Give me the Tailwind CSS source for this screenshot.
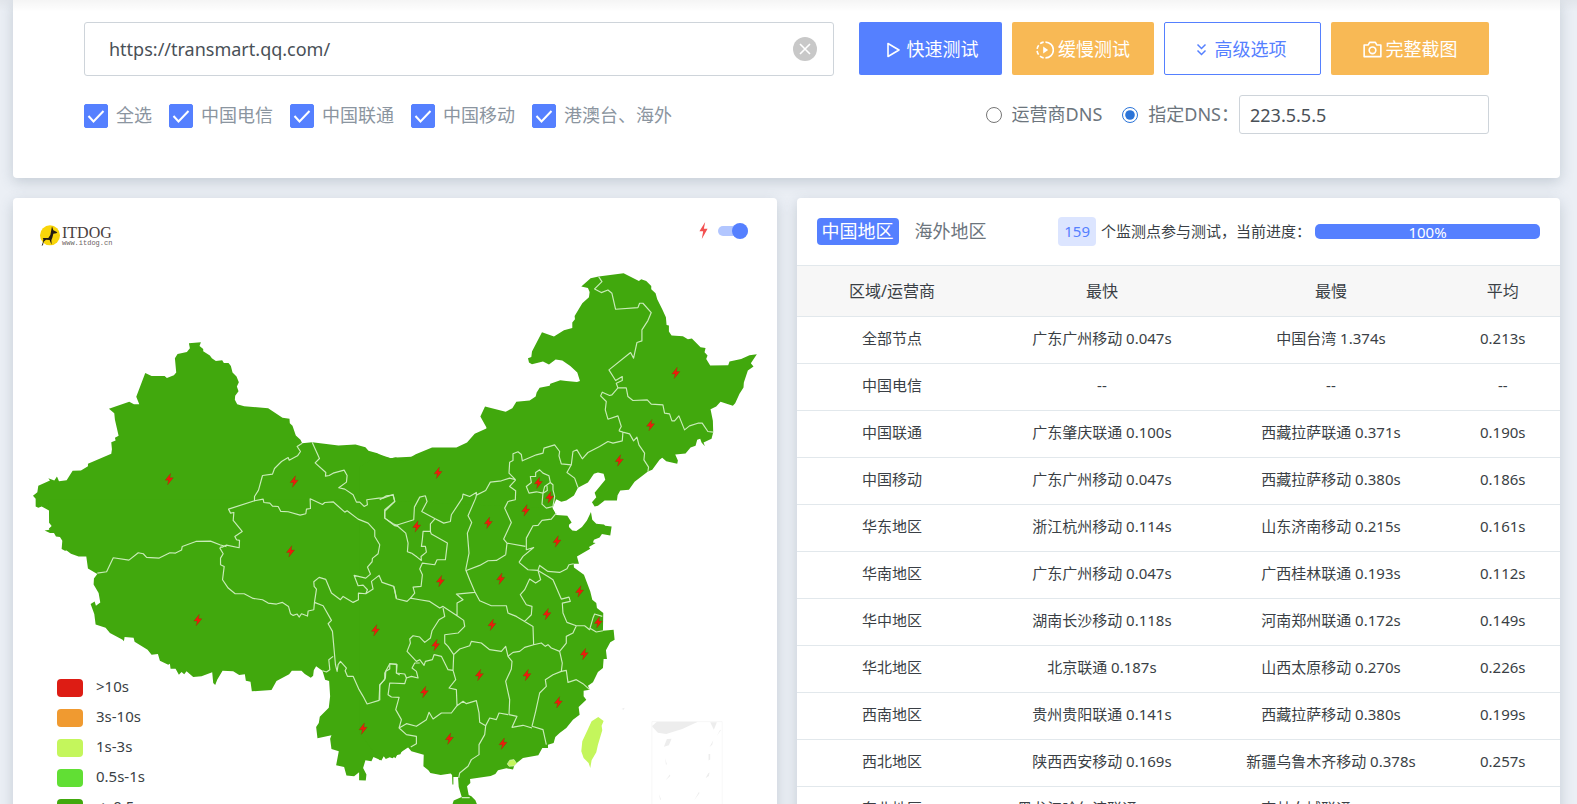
<!DOCTYPE html>
<html lang="zh-CN">
<head>
  <meta charset="UTF-8" />
  <meta name="viewport" content="width=device-width, initial-scale=1" />
  <title>ITDOG - 网站测速</title>
  <script src="https://cdn.jsdelivr.net/npm/@tailwindcss/browser@4"></script>
</head>
<body class="h-screen overflow-hidden bg-[#ebeff5] font-['Noto_Sans','Noto_Sans_CJK_SC',sans-serif] text-[15px] text-[#3a3f45]">
  <div class="absolute inset-x-0 top-0 h-3 bg-linear-to-b from-black/4 to-transparent"></div>

  <main class="pl-[13px] pr-[17px]">
    <!-- 测试表单 -->
    <form class="bg-white rounded-b px-[71px] pt-[22px] pb-11 shadow-[0_4px_14px_rgba(60,80,100,0.22)]">
      <div class="flex items-start gap-[10px]">
        <div class="relative flex-1 mr-[15px]">
          <input type="text" aria-label="网址" value="https://transmart.qq.com/" class="block w-full h-[54px] px-6 border border-[#ced4da] rounded-[3px] text-[18px] text-[#495057]" />
          <button type="button" aria-label="清空" class="absolute right-[17px] top-[15px]">
            <svg class="w-6 h-6" viewBox="0 0 24 24"><circle cx="12" cy="12" r="12" fill="#c8c8c8" /><path d="M7 7l10 10M17 7L7 17" stroke="#fff" stroke-width="1.6" /></svg>
          </button>
        </div>
        <button type="button" class="flex items-center justify-center gap-1 w-[143px] h-[53px] pt-[2px] rounded-[2px] bg-[#5580ff] text-white text-[18px]">
          <svg class="w-5 h-5" viewBox="0 0 20 20" fill="none" stroke="currentColor" stroke-width="1.6" stroke-linejoin="round"><path d="M5 3.500v13l11-6.500z" /></svg>
          快速测试
        </button>
        <button type="button" class="flex items-center justify-center gap-1 w-[142px] h-[53px] pt-[2px] rounded-[2px] bg-[#f8b955] text-white text-[18px]">
          <svg class="w-[18px] h-[18px]" viewBox="0 0 20 20" fill="none" stroke="currentColor" stroke-width="1.800"><path d="M10.500 1.200a8.800 8.800 0 0 1 0 17.600" /><path d="M8.500 18.700A8.800 8.800 0 0 1 1.200 9.500A8.800 8.800 0 0 1 8.500 1.300" stroke-dasharray="4.500 2.200" /><path d="M8 6.200v7.600l5.500-3.800z" fill="currentColor" stroke="none" /></svg>
          缓慢测试
        </button>
        <button type="button" class="flex items-center justify-center gap-1 w-[157px] h-[53px] pt-[2px] pr-[6px] rounded-[2px] border border-[#5580ff] text-[#5580ff] text-[18px]">
          <svg class="w-[18px] h-[18px]" viewBox="0 0 18 18" fill="none" stroke="currentColor" stroke-width="1.500"><path d="M4.500 3.500l4 4 4-4M4.500 9.500l4 4 4-4" /></svg>
          高级选项
        </button>
        <button type="button" class="flex items-center justify-center gap-1 w-[158px] h-[53px] pt-[2px] rounded-[2px] bg-[#f8b955] text-white text-[18px]">
          <svg class="w-[19px] h-[19px]" viewBox="0 0 20 20" fill="none" stroke="currentColor" stroke-width="1.700"><path d="M1.200 5.200h4.300l1.500-2.700h6l1.500 2.700h4.300v12.300H1.200z" stroke-linejoin="round" /><circle cx="10" cy="10.800" r="3.500" /></svg>
          完整截图
        </button>
      </div>

      <div class="flex items-center justify-between mt-[19px] text-[18px]">
        <div class="flex gap-[17px] pt-[2px] text-[#8b95a0]">
          <label class="flex items-center gap-2"><span class="relative block w-6 h-6"><input type="checkbox" checked class="block w-6 h-6 appearance-none rounded-[2px] border border-[#5580ff] checked:bg-[#5580ff]" /><svg class="absolute inset-0 w-6 h-6 pointer-events-none" viewBox="0 0 24 24" fill="none" stroke="#fff" stroke-width="2"><path d="M4.500 12l5 5.500L19.500 7" /></svg></span>全选</label>
          <label class="flex items-center gap-2"><span class="relative block w-6 h-6"><input type="checkbox" checked class="block w-6 h-6 appearance-none rounded-[2px] border border-[#5580ff] checked:bg-[#5580ff]" /><svg class="absolute inset-0 w-6 h-6 pointer-events-none" viewBox="0 0 24 24" fill="none" stroke="#fff" stroke-width="2"><path d="M4.500 12l5 5.500L19.500 7" /></svg></span>中国电信</label>
          <label class="flex items-center gap-2"><span class="relative block w-6 h-6"><input type="checkbox" checked class="block w-6 h-6 appearance-none rounded-[2px] border border-[#5580ff] checked:bg-[#5580ff]" /><svg class="absolute inset-0 w-6 h-6 pointer-events-none" viewBox="0 0 24 24" fill="none" stroke="#fff" stroke-width="2"><path d="M4.500 12l5 5.500L19.500 7" /></svg></span>中国联通</label>
          <label class="flex items-center gap-2"><span class="relative block w-6 h-6"><input type="checkbox" checked class="block w-6 h-6 appearance-none rounded-[2px] border border-[#5580ff] checked:bg-[#5580ff]" /><svg class="absolute inset-0 w-6 h-6 pointer-events-none" viewBox="0 0 24 24" fill="none" stroke="#fff" stroke-width="2"><path d="M4.500 12l5 5.500L19.500 7" /></svg></span>中国移动</label>
          <label class="flex items-center gap-2"><span class="relative block w-6 h-6"><input type="checkbox" checked class="block w-6 h-6 appearance-none rounded-[2px] border border-[#5580ff] checked:bg-[#5580ff]" /><svg class="absolute inset-0 w-6 h-6 pointer-events-none" viewBox="0 0 24 24" fill="none" stroke="#fff" stroke-width="2"><path d="M4.500 12l5 5.500L19.500 7" /></svg></span>港澳台、海外</label>
        </div>
        <div class="flex items-center text-[#6c757d]">
          <label class="flex items-center gap-[10px] mr-5"><input type="radio" name="dns" class="w-4 h-4 accent-[#2b74d8]" />运营商DNS</label>
          <label class="flex items-center gap-[10px]"><input type="radio" name="dns" checked class="w-4 h-4 accent-[#2b74d8]" />指定DNS&#xFF1A;</label>
          <input type="text" aria-label="DNS" value="223.5.5.5" class="w-[250px] h-[39px] px-[10px] border border-[#ced4da] rounded-[3px] text-[18px] text-[#495057]" />
        </div>
      </div>
    </form>

    <div class="grid grid-cols-2 gap-5 mt-5 items-start">
      <!-- 地图 -->
      <section class="relative bg-white rounded shadow-[0_4px_14px_rgba(60,80,100,0.22)]">
        <svg class="block w-full" viewBox="39 594 2292 1950">
          <defs>
            <path id="bolt" d="M4-17L-12 3H-2L-5 17L12-4H2z" fill="#f01a0c" stroke="#8a3a08" stroke-width="1" />
          </defs>
          <g fill="#41a80d">
            <path transform="translate(0 570)" d="M99 918L112 907 115 888 150 872 145 865 163 872 171 860 177 874 200 871 218 843 243 842 264 829 264 822 334 792 336 778 334 757 347 752 345 744 356 738 345 690 343 670 327 657 388 636 402 643 418 643 409 621 436 549 455 558 494 558 501 564 522 556 529 548 525 505 533 492 561 486 570 475 567 460 603 457 599 468 610 477 610 484 630 497 636 505 648 513 667 511 672 519 686 519 693 528 698 548 710 560 717 577 711 590 716 604 706 618 705 630 712 643 733 649 805 655 848 684 869 687 870 700 878 708 888 737 902 750 907 760 937 757 1016 767 1067 764 1097 772 1106 783 1133 790 1153 801 1173 805 1190 803 1250 800 1250 1000 148 1000 147 962 125 950 115 954 107 950 107 927z" />
            <path transform="translate(0 1440)" d="M147 60L147 92 148 130 155 139 147 146 148 150 134 152 150 160 162 160 168 170 180 172 187 183 185 208 195 213 200 212 213 222 236 230 259 230 264 266 292 283 282 296 281 314 296 340 301 368 288 378 284 365 272 373 283 403 287 434 317 444 330 460 368 480 372 485 374 472 401 474 404 486 443 510 455 525 474 523 480 543 505 555 510 552 512 567 527 567 537 585 545 577 553 584 560 575 580 592 605 590 637 578 640 610 646 616 652 600 668 573 700 575 718 586 735 584 738 603 752 606 756 635 815 631 830 604 868 584 876 573 905 573 915 583 933 594 940 588 942 572 949 560 968 573 976 600 988 604 991 650 987 684 960 711 957 730 949 742 953 776 995 767 991 777 995 808 1017 815 1009 857 1033 862 1040 888 1063 890 1078 878 1078 902 1098 903 1100 885 1090 865 1097 842 1115 845 1121 832 1145 843 1152 830 1158 838 1170 833 1178 836 1187 829 1230 800 1300 60z" />
            <path transform="translate(1140 780)" d="M0 584L33 595 50 592 52 600 72 604 108 583 157 563 230 563 262 548 285 522 320 506 320 502 302 470 316 440 378 456 398 445 410 426 450 422 468 410 471 398 480 384 510 378 512 372 542 361 560 363 592 366 601 363 593 338 572 318 548 302 528 299 508 314 490 305 457 313 448 308 445 295 455 291 457 275 487 217 523 230 553 211 578 204 578 188 586 178 585 168 608 130 628 112 630 96 625 84 605 80 633 55 657 50 732 40 778 63 785 58 800 63 815 78 815 88 828 100 833 118 848 148 859 172 861 195 868 197 868 215 876 227 910 229 925 238 937 236 963 262 978 264 975 277 984 287 980 297 992 317 1046 316 1050 305 1085 297 1110 286 1132 283 1114 310 1122 320 1105 332 1093 368 1092 383 1080 402 1067 430 1060 438 1023 426 1010 440 993 448 1000 483 1001 517 996 537 972 548 976 559 966 548 962 537 953 540 948 558 933 563 918 581 887 584 895 602 893 612 860 604 848 594 840 600 818 630 805 635 765 666 748 690 722 692 714 706 712 722 675 722 655 738 645 740 637 727 650 712 645 699 677 660 672 642 655 638 643 642 625 668 595 684 583 707 560 722 545 726 530 718 518 745 530 766 400 820 -60 820-60 620z" />
            <path transform="translate(1140 1500)" d="M-60 0L518 25 530 46 563 48 576 68 568 75 568 82 578 92 590 94 607 82 622 62 634 37 638 60 650 72 673 74 677 78 696 80 692 107 667 103 660 113 643 120 640 128 648 130 628 142 632 147 592 170 598 192 582 192 583 203 613 225 632 275 638 300 650 310 652 325 671 340 670 393 702 390 705 420 692 428 679 452 682 478 672 478 670 505 655 517 640 548 625 558 630 570 612 573 612 590 620 600 597 622 600 645 580 660 560 685 540 700 527 712 522 730 505 735 505 745 488 745 476 767 430 775 405 795 400 810 380 806 355 812 347 823 333 829 271 838 272 850 262 860 267 886 275 890 287 902 310 960 210 960 219 912 222 903 246 892 237 862 235 832 221 832 221 855 218 855 217 826 213 822 183 826 152 820 146 812 131 800 132 765 95 755 84 742 67 752 62 764 52 766 47 776 40 770 12 768 0 782-60 700z" />
          </g>
          <!-- 省界 -->
          <g fill="none" stroke="#c9ecb9" stroke-width="3.500" stroke-linejoin="round">
            <path transform="translate(0 570)" d="M907 760L892 770 902 785 893 798 868 811 865 803 845 815 824 836 818 853 788 857 776 901 764 920 764 934M937 757L959 806 946 819 978 848 977 859 988 857 1000 850 1033 841 1042 857 1040 877 1017 894 1035 898 1060 915 1070 937 1080 937 1093 950 1103 945 1101 930 1137 925 1150 925 1180 914 1185 935 1155 965" />
            <path transform="translate(0 1440)" d="M1155 95L1155 115 1180 132 1195 138M764 63L686 88 692 100 702 98 700 122 727 155 705 170 710 180 719 182 718 204 680 196 665 203M292 280L320 276 340 234 387 241 415 219 430 222 440 233 478 235 510 219 527 220 545 211 547 200 588 185 632 184 660 195 680 201M764 63L790 58 792 68 810 70 818 79 835 80 843 95 865 96 901 106 918 102 920 88 932 86 931 57 968 74 975 68 1000 66 1035 97 1042 93 1075 118 1105 130 1125 152 1125 170 1140 195 1135 222 1118 236 1117 246 1103 262 1112 283 1098 295 1063 287 1075 318 1090 316 1103 330 1098 342 1076 340 1076 360 1060 368 1030 350 1022 360 995 340 978 299 958 293 942 306 943 320 950 328 944 368 942 390 925 394 923 409 905 402 898 412 892 403 880 407 872 402 866 380 848 368 830 373 805 370 788 360 760 356 733 342 706 342 685 325 668 300 673 260 662 255 662 235 670 222 660 205 665 200M944 368L970 378 995 422 985 432 998 455 1007 555 1012 575 1015 555 1022 545 1040 565 1036 573 1043 590 1060 590 1078 630 1090 650 1102 673 1138 662 1140 617 1157 595 1158 575 1170 568 1170 553 1190 553 1190 580 1200 586M968 573L980 577 990 570 987 540 1000 530M1098 342L1120 328 1115 305 1138 287 1147 308 1182 320 1190 357" />
            <path transform="translate(1140 780)" d="M0 720L20 708 40 706 45 725 15 750 15 775 45 798 102 780 104 742 120 712 137 708 142 725 126 755 165 776 192 790 212 785 215 765 248 715 250 703 270 710 290 698 290 706 318 692 332 667 365 663 390 655 408 660M45 798L55 800 78 820 85 850 83 876 95 880M290 706L288 715 265 768 276 788 263 820 268 880 258 930M408 660L390 680 408 693 407 720 385 725 375 745 395 788 372 838 382 850 378 885M408 660L388 640 390 607 400 602 400 582 415 576 425 584 428 603 470 585 490 580 493 565 525 555 540 575 538 588 545 612 575 615 580 575 592 570 608 597 625 578 660 560 685 545 700 550 728 543 730 517M575 615L562 638 585 655 595 683M718 513L730 517 750 522 762 543 772 532 778 555 795 580 793 600 807 622 805 635M718 513L725 500 715 468 685 478 677 450 680 425 663 408 668 397 690 407 697 405 715 384 740 384 745 410 760 422 803 420 815 433 850 435 855 460 870 462 877 483 885 483 898 468 915 510 930 498 955 490 968 490 985 515 1001 517M657 50L667 65 645 87 665 98 685 90 697 100 708 148 775 143 780 130 790 130 815 158 805 182 787 210 787 243 772 248 762 295 753 278 688 330 708 362 728 350 728 362 710 370 715 384M480 630L490 640 508 648 512 668 495 680 490 700 470 696 448 700 440 680 455 668 452 650 468 650 468 638zM512 668L520 675 520 690 525 710 520 740 500 745 487 733 490 700 503 692 502 678M530 760L515 778 487 782 475 797 460 798 440 835 440 870 462 863 430 890 418 908M382 850L437 860" />
            <path transform="translate(1140 1500)" d="M95 160L112 172 125 182 124 170 140 157 137 140 125 140 128 118 130 95 152 95 152 72 165 58M152 95L155 103 203 130 197 180 172 180 165 195 128 190 120 208 128 225 124 260 100 262 105 280 92 295 120 300 150 305 180 325 190 320 232 348M50 297L82 305 92 295M50 297L45 270 42 260M190 325L195 350 178 360 157 393 152 415 135 428 120 412 100 408 90 418 92 430 82 455 110 485 120 480 133 497 137 485 158 480 163 465 185 470 205 510 220 512 222 465 205 440 195 430 195 405 235 400 255 380 252 362 232 348 232 310 250 300 230 283 285 278M258 210L270 240 285 275 300 303 335 318 380 318 385 340 410 350 435 365 460 380 462 435M378 165L350 182 325 183 300 197 258 213M418 188L445 210 475 212 480 197 505 215 540 218 562 207 568 195 582 192M475 212L483 240 468 250 450 238 435 270 422 285 440 315 457 320 455 345 435 365M475 212L505 230 520 240 545 298 568 292 572 305 548 310 550 340 562 368 590 378 580 400 560 410 560 430 540 455M590 378L615 378 630 390 640 355 645 343 668 350M630 385L650 397 670 393M462 435L485 430 497 440 505 435 515 445 540 455 548 490 545 515 560 512 565 548 590 540 610 552 630 570M545 515L520 525 497 540 500 560 480 580 468 635 457 680M462 435L435 443 420 455 400 458 385 470 378 440 365 455 330 450 305 430 275 425 270 438 240 448 222 465M385 470L397 485 395 508 378 545 390 600 388 645 412 650 397 683 430 677 457 685M220 512L228 540 208 565 230 570 232 618 250 605 260 612 290 603 298 640 300 668 318 678 330 655 350 660 358 640 385 645M0 602L0 555 15 540 15 520 30 492 52 495 50 520 75 523 80 535M80 535L95 530 115 535 110 515 97 505 105 490 120 490M80 535L75 552 30 550 25 585 35 592 58 593 48 630 65 660 58 685 80 672 110 680 140 660 148 638 160 658 185 640 215 640 232 618M58 685L80 705 110 710 110 732 93 742M318 678L315 705 298 735 298 765 275 780 265 800 240 820 237 835M457 680L490 690 500 735M246 894H270" />
          </g>
          <!-- 台湾、香港 -->
          <g transform="translate(1140 1500)" fill="#c4f65c">
            <path d="M656 652L672 664 666 678 668 692 655 735 650 758 636 782 632 805 627 790 612 775 605 755 608 725 636 665z" />
            <path d="M383 793L390 782 403 780 411 792 403 799 388 800z" stroke="#d9f5c0" stroke-width="2" />
          </g>
          <!-- 南海诸岛 -->
          <g transform="translate(1140 1500)" fill="#ededed">
            <path d="M817 680L832 666H955L908 688 860 703 835 699z" />
            <path d="M992 668H1012L1003 690zM862 718L876 717 868 737 853 741zM1012 708L1022 690 1024 692zM990 742L1001 722 998 735zM987 763H992V780L987 783zM857 775L862 795 859 795zM858 842L871 825 872 829zM978 836L986 821 990 819 988 829zM838 883L844 898 842 902zM944 902L958 877 960 880zM725 628L735 624 733 630z" />
            <path d="M817 1020V666H1028V1020" fill="none" stroke="#f3f3f3" stroke-width="2" />
          </g>
          <g>
            <use href="#bolt" x="508" y="1438" /><use href="#bolt" x="883" y="1445" />
            <use href="#bolt" x="1315" y="1419" /><use href="#bolt" x="2029" y="1119" />
            <use href="#bolt" x="1953" y="1276" /><use href="#bolt" x="1859" y="1382" />
            <use href="#bolt" x="1616" y="1449" /><use href="#bolt" x="1650" y="1493" />
            <use href="#bolt" x="1578" y="1532" /><use href="#bolt" x="1466" y="1569" />
            <use href="#bolt" x="1251" y="1580" /><use href="#bolt" x="1672" y="1625" />
            <use href="#bolt" x="872" y="1655" /><use href="#bolt" x="594" y="1861" />
            <use href="#bolt" x="1127" y="1892" /><use href="#bolt" x="1090" y="2187" />
            <use href="#bolt" x="1322" y="1744" /><use href="#bolt" x="1503" y="1737" />
            <use href="#bolt" x="1740" y="1775" /><use href="#bolt" x="1642" y="1843" />
            <use href="#bolt" x="1796" y="1868" /><use href="#bolt" x="1477" y="1875" />
            <use href="#bolt" x="1308" y="1936" /><use href="#bolt" x="1754" y="1963" />
            <use href="#bolt" x="1439" y="2026" /><use href="#bolt" x="1582" y="2026" />
            <use href="#bolt" x="1274" y="2077" /><use href="#bolt" x="1676" y="2108" />
            <use href="#bolt" x="1349" y="2217" /><use href="#bolt" x="1510" y="2232" />
          </g>
        </svg>

        <!-- Logo 和开关 -->
        <div class="absolute inset-x-0 top-0 flex items-start justify-between pl-[27px] pr-[29px]">
          <a href="#" class="flex pt-[27px]">
            <svg class="w-5 h-[21px]" viewBox="0 0 60 63"><circle cx="30" cy="31" r="30" fill="#f9d50a" /><path d="M36 4l4 12 12 6-3 3-9 1-3 12-3 8 1 13-5-11-1-3-11-1-7 6-2 10-4 3 4-13 1-8-2-3h17l6-9z" fill="#231a12" /></svg>
            <span class="flex flex-col pl-[2px] pt-px text-[#4a4040]">
              <span class="font-['Liberation_Serif',serif] text-[16px] leading-[14px]">ITDOG</span>
              <span class="font-['Liberation_Mono',monospace] text-[7px] leading-[6px] text-[#6a6262]">www.itdog.cn</span>
            </span>
          </a>
          <label class="flex items-center gap-[10px] pt-6">
            <svg class="w-[9px] h-[17px]" viewBox="0 0 24 50"><path d="M17 0L0 27h11L7 50 24 20H13z" fill="#f25050" /></svg>
            <input type="checkbox" checked aria-label="显示节点" class="relative block w-[30px] h-[10px] appearance-none rounded-full bg-[#b2c6ff] before:absolute before:right-0 before:-top-[3px] before:w-4 before:h-4 before:rounded-full before:bg-[#5580ff]" />
          </label>
        </div>

        <!-- 图例 -->
        <ul class="absolute left-11 top-[475px] leading-[26px]">
          <li class="flex items-center gap-[13px] h-[30px]"><span class="w-[26px] h-[18px] rounded bg-[#dd1c14]"></span><span class="pb-1">&gt;10s</span></li>
          <li class="flex items-center gap-[13px] h-[30px]"><span class="w-[26px] h-[18px] rounded bg-[#f09a30]"></span><span class="pb-1">3s-10s</span></li>
          <li class="flex items-center gap-[13px] h-[30px]"><span class="w-[26px] h-[18px] rounded bg-[#c4f65c]"></span><span class="pb-1">1s-3s</span></li>
          <li class="flex items-center gap-[13px] h-[30px]"><span class="w-[26px] h-[18px] rounded bg-[#61df34]"></span><span class="pb-1">0.5s-1s</span></li>
          <li class="flex items-center gap-[13px] h-[30px]"><span class="w-[26px] h-[18px] rounded bg-[#41a80d]"></span><span class="pb-1">&lt;=0.5s</span></li>
        </ul>
      </section>

      <!-- 统计表 -->
      <section class="bg-white rounded shadow-[0_4px_14px_rgba(60,80,100,0.22)]">
        <div class="flex items-center h-[67px] px-5">
          <button type="button" class="px-[5px] h-[27px] rounded bg-[#5580ff] text-white text-[18px] leading-[27px]">中国地区</button>
          <button type="button" class="ml-4 text-[#6c757d] text-[18px] leading-[27px]">海外地区</button>
          <span class="ml-auto px-[6px] rounded bg-[#dce5ff] text-[#5580ff] leading-[29px]">159</span>
          <span class="ml-[5px]">个监测点参与测试&#xFF0C;当前进度&#xFF1A;</span>
          <div class="w-[225px] h-[15px] ml-1 mb-px rounded-[5px] bg-[#5580ff] text-white text-center leading-[16px]">100%</div>
        </div>
        <table class="w-full table-fixed text-center">
          <thead class="bg-[#f7f7f7] text-[16px]">
            <tr class="h-[51px] border-y border-[#e2e8ec]">
              <th class="w-1/4 font-normal">区域/运营商</th>
              <th class="w-[30%] font-normal">最快</th>
              <th class="w-[30%] font-normal">最慢</th>
              <th class="w-[15%] font-normal">平均</th>
            </tr>
          </thead>
          <tbody class="[&_td]:pb-[3px]">
            <tr class="h-[47px] border-b border-[#e2e8ec]"><td>全部节点</td><td>广东广州移动 0.047s</td><td>中国台湾 1.374s</td><td>0.213s</td></tr>
            <tr class="h-[47px] border-b border-[#e2e8ec]"><td>中国电信</td><td>--</td><td>--</td><td>--</td></tr>
            <tr class="h-[47px] border-b border-[#e2e8ec]"><td>中国联通</td><td>广东肇庆联通 0.100s</td><td>西藏拉萨联通 0.371s</td><td>0.190s</td></tr>
            <tr class="h-[47px] border-b border-[#e2e8ec]"><td>中国移动</td><td>广东广州移动 0.047s</td><td>西藏拉萨移动 0.380s</td><td>0.186s</td></tr>
            <tr class="h-[47px] border-b border-[#e2e8ec]"><td>华东地区</td><td>浙江杭州移动 0.114s</td><td>山东济南移动 0.215s</td><td>0.161s</td></tr>
            <tr class="h-[47px] border-b border-[#e2e8ec]"><td>华南地区</td><td>广东广州移动 0.047s</td><td>广西桂林联通 0.193s</td><td>0.112s</td></tr>
            <tr class="h-[47px] border-b border-[#e2e8ec]"><td>华中地区</td><td>湖南长沙移动 0.118s</td><td>河南郑州联通 0.172s</td><td>0.149s</td></tr>
            <tr class="h-[47px] border-b border-[#e2e8ec]"><td>华北地区</td><td>北京联通 0.187s</td><td>山西太原移动 0.270s</td><td>0.226s</td></tr>
            <tr class="h-[47px] border-b border-[#e2e8ec]"><td>西南地区</td><td>贵州贵阳联通 0.141s</td><td>西藏拉萨移动 0.380s</td><td>0.199s</td></tr>
            <tr class="h-[47px] border-b border-[#e2e8ec]"><td>西北地区</td><td>陕西西安移动 0.169s</td><td>新疆乌鲁木齐移动 0.378s</td><td>0.257s</td></tr>
            <tr class="h-[47px] border-b border-[#e2e8ec]"><td>东北地区</td><td>黑龙江哈尔滨联通 0.252s</td><td>吉林白城联通 0.308s</td><td>0.281s</td></tr>
          </tbody>
        </table>
      </section>
    </div>
  </main>
</body>
</html>
